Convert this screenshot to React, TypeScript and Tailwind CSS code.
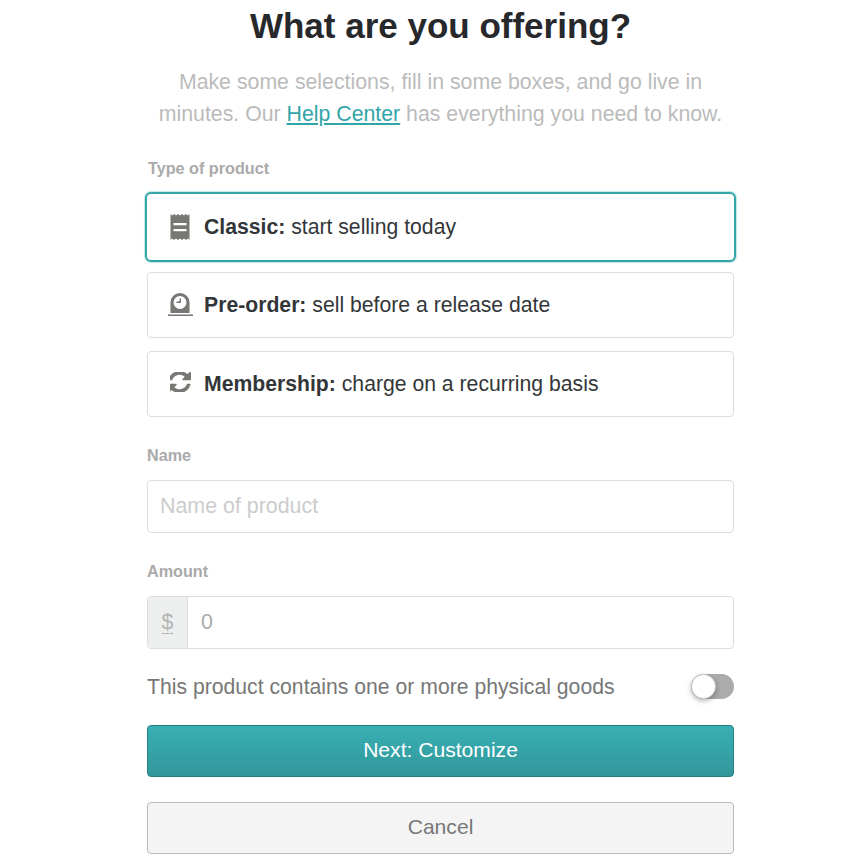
function ReceiptIcon() {
  return (
    <svg width="20" height="26" viewBox="0 0 20 26" className="block">
      <path
        fill="#777773"
        fillRule="evenodd"
        d="M.500 0L2 1.500 4 0l2 1.500L8 0l2 1.500L12 0l2 1.500L16 0l2 1.500L19.500 0v26L18 24.500 16 26l-2-1.500L12 26l-2-1.500L8 26l-2-1.500L4 26l-2-1.500L.500 26zM3.500 9v2.200h13V9zm0 6v2.200h13V15z"
      />
    </svg>
  );
}

function PreorderIcon() {
  return (
    <svg width="26" height="26" viewBox="0 0 26 26" className="block">
      <path
        fill="#777773"
        fillRule="evenodd"
        d="M13 1a9.500 9.500 0 0 1 9.500 9.500V21h-19V10.500A9.500 9.500 0 0 1 13 1zM13 4a6.500 6.500 0 1 0 0 13 6.500 6.500 0 0 0 0-13z"
      />
      <path fill="#777773" d="M12.500 6.500h1.500v4.500H9.500V9.500h3zM1 22.500h25V24H1z" />
    </svg>
  );
}

function RefreshIcon() {
  return (
    <svg width="21" height="20" viewBox="128 192 1408 1408" preserveAspectRatio="none" className="-mt-[5px] block">
      <path
        fill="#777773"
        d="M1511 1056q0 5-1 7-64 268-268 434.500t-478 166.500q-146 0-282.500-55t-243.500-157l-129 129q-19 19-45 19t-45-19-19-45v-448q0-26 19-45t45-19h448q26 0 45 19t19 45-19 45l-137 137q71 66 161 102t187 36q134 0 250-65t186-179q11-17 53-117 8-23 30-23h192q13 0 22.500 9.500t9.500 22.500zm25-800v448q0 26-19 45t-45 19h-448q-26 0-45-19t-19-45 19-45l138-138q-148-137-349-137-134 0-250 65t-186 179q-11 17-53 117-8 23-30 23h-199q-13 0-22.500-9.500t-9.500-22.500v-7q65-268 270-434.500t480-166.500q146 0 284 55.500t245 156.500l130-129q19-19 45-19t45 19 19 45z"
      />
    </svg>
  );
}

const options = [
  { icon: <ReceiptIcon />, name: "Classic:", text: "start selling today" },
  { icon: <PreorderIcon />, name: "Pre-order:", text: "sell before a release date" },
  { icon: <RefreshIcon />, name: "Membership:", text: "charge on a recurring basis" },
];

export default function App() {
  return (
    <div className="h-[860px] overflow-hidden bg-white pl-[147px] pr-[117px] font-['Liberation_Sans',Arial,sans-serif]">
      <h1 className="pt-[6px] text-center text-[35px] font-bold leading-[40px] text-[#26282b]">
        What are you offering?
      </h1>
      <p className="mt-[20px] text-center text-[21.3px] leading-[32px] text-[#bbbbbb]">
        Make some selections, fill in some boxes, and go live in
        <br />
        minutes. Our <a className="text-[#32a5a8] underline">Help Center</a> has everything you need
        to know.
      </p>

      <label className="mt-[28px] block pl-px text-[16.2px] font-bold leading-[20px] text-[#aaaaaa]">
        Type of product
      </label>
      <div className="mt-[15px] flex flex-col gap-[13px]">
        {options.map((o, i) => (
          <div
            key={o.name}
            className={
              i === 0
                ? "-mx-[2px] -mb-[3px] -mt-px flex h-[70px] items-center rounded-[6px] border-2 border-[#32a5a8] bg-white pl-[20px] text-[21.2px] text-[#333639] shadow-[0_0_1px_1px_rgba(50,165,168,0.3)]"
                : "flex h-[66px] items-center rounded-[4px] border border-[#dddddd] bg-white pl-[19px] text-[21.2px] text-[#333639]"
            }
          >
            <span className="flex w-[26px] justify-center">{o.icon}</span>
            <span className="ml-[11px]">
              <b>{o.name}</b> {o.text}
            </span>
          </div>
        ))}
      </div>

      <label className="mt-[28px] block text-[16.2px] font-bold leading-[20px] text-[#aaaaaa]">
        Name
      </label>
      <div className="mt-[15px] flex h-[53px] items-center rounded-[4px] border border-[#dddddd] px-[12px] text-[21.4px] text-[#cccccc]">
        Name of product
      </div>

      <label className="mt-[28px] block text-[16.2px] font-bold leading-[20px] text-[#aaaaaa]">
        Amount
      </label>
      <div className="mt-[15px] flex h-[53px] overflow-hidden rounded-[4px] border border-[#dddddd]">
        <span className="flex w-[40px] items-center justify-center border-r border-[#dddddd] bg-[#edeeee] text-[21.4px] text-[#b4b4b4]">
          <span className="border-b border-dashed border-[#aaaaaa] leading-[22px]">$</span>
        </span>
        <span className="flex items-center pl-[13px] text-[21.4px] text-[#aaaaaa]">0</span>
      </div>

      <div className="mt-[20px] flex h-[36px] items-center justify-between text-[21.2px] text-[#777777]">
        <span>This product contains one or more physical goods</span>
        <span className="relative mb-[2px] h-[25px] w-[43px] rounded-full bg-[#ababab]">
          <span className="absolute left-0 top-0 h-[25px] w-[25px] rounded-full border border-[#cccccc] bg-white shadow-[0_2px_5px_rgba(0,0,0,0.3)]" />
        </span>
      </div>

      <button className="mt-[20px] block h-[52px] w-full rounded-[4px] border border-[#2a8085] bg-gradient-to-b from-[#38b0b3] to-[#32979b] pb-[2px] text-[21.1px] text-white">
        Next: Customize
      </button>
      <button className="mt-[25px] block h-[52px] w-full rounded-[4px] border border-[#bbbbbb] bg-[#f4f4f4] pb-[2px] text-[21.1px] text-[#777777]">
        Cancel
      </button>
    </div>
  );
}
